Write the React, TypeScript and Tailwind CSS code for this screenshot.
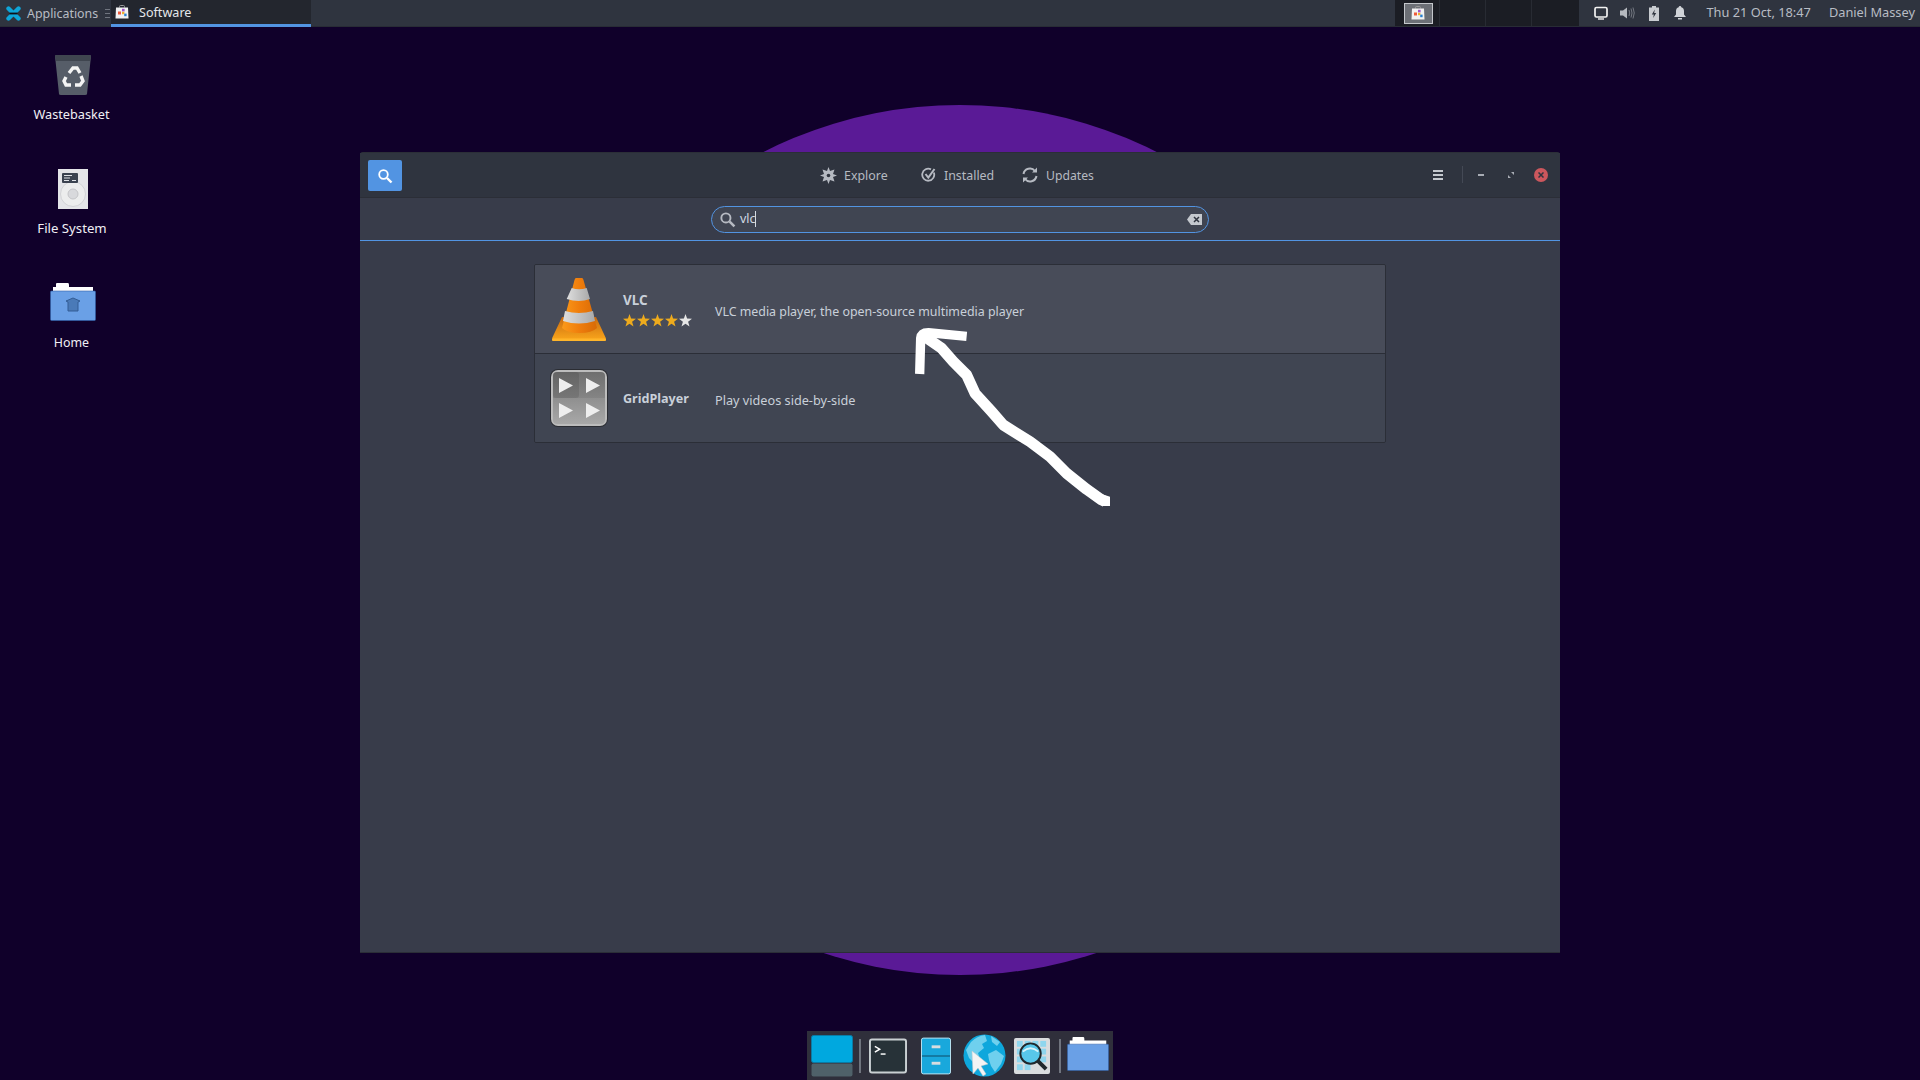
import React from "react";

const font = { fontFamily: '"Noto Sans", "Open Sans", sans-serif' };

function AppsLogo() {
  return (
    <svg width="15" height="15" viewBox="0 0 15 15">
      <path d="M2.500 2.500 L12.500 12.500 M12.500 2.500 L2.500 12.500" stroke="#0ea5d9" strokeWidth="4.400" strokeLinecap="round" />
      <rect x="3.500" y="6.600" width="8" height="1.800" fill="#101018" />
    </svg>
  );
}

function SoftwareIcon({ size = 14 }: { size?: number }) {
  return (
    <svg width={size} height={size} viewBox="0 0 14 14">
      <path d="M4.500 2.500 V1.500 Q4.500 .5 5.500 .5 H8.500 Q9.500 .5 9.500 1.500 V2.500" fill="none" stroke="#9a9a9a" strokeWidth="1" />
      <path d="M1 2.500 H13 L13.500 13.500 H.5 Z" fill="#f2f2f2" />
      <rect x="3" y="6.500" width="3" height="3" fill="#ef5a3c" />
      <rect x="7" y="3.800" width="2.600" height="2.600" fill="#a050c8" />
      <rect x="7" y="6.800" width="2.400" height="2.400" fill="#f0b030" />
      <rect x="9.200" y="8.600" width="2.400" height="2.600" fill="#2a80d0" />
    </svg>
  );
}

function Wastebasket() {
  return (
    <svg width="38" height="42" viewBox="0 0 38 42">
      <path d="M1 2 Q1 1 3 1 H35 Q37 1 37 2 L33 40 Q33 41 31 41 H7 Q5 41 5 40 Z" fill="#565d68" />
      <path d="M1 2 Q1 1 3 1 H35 Q37 1 37 2 L36 7 H2 Z" fill="#3f454f" />
      <g fill="none" stroke="#f4f4f4" strokeWidth="3.400">
        <path d="M15 19 L19 14 L23 14 L26 19" />
        <path d="M27 22 L29 27 L26 31 L21 31" />
        <path d="M17 31 L12 31 L10 27 L12 23" />
      </g>
    </svg>
  );
}

function FileSystemIcon() {
  return (
    <svg width="30" height="40" viewBox="0 0 30 40">
      <rect width="30" height="40" fill="#e4e5e8" />
      <circle cx="15" cy="25" r="12.500" fill="#eceded" stroke="#d2d3d6" />
      <circle cx="15" cy="25" r="5" fill="#d8d9dc" stroke="#c4c5c8" />
      <rect x="4" y="4" width="16" height="10" rx="1" fill="#3b4350" />
      <path d="M6 6.500 H14 M6 9 H12 M6 11.500 H11 M14 11.500 H18" stroke="#dfe2e6" strokeWidth="1" />
    </svg>
  );
}

function FolderIcon({ home, w = 46, h = 38 }: { home?: boolean; w?: number; h?: number }) {
  return (
    <svg width={w} height={h} viewBox="0 0 46 38" preserveAspectRatio="none">
      <path d="M3 4 H6 V1 Q6 0 7 0 H18 Q19 0 19 2 V4 H43 V10 H3 Z" fill="#ffffff" />
      <rect x=".5" y="8" width="45" height="29.500" rx="1" fill="#6aa0e6" stroke="#2f5fa8" strokeWidth=".6" />
      {home && <path d="M16 18 L23 15 L30 18 L28 19 V28 H18 V19 Z" fill="#4a7ab8" stroke="#335d95" strokeWidth="1" />}
    </svg>
  );
}

function Cone() {
  return (
    <svg width="54" height="63" viewBox="0 0 54 63">
      <defs>
        <linearGradient id="cb" x1="0" x2="0" y1="0" y2="1">
          <stop offset="0" stopColor="#c96a10" />
          <stop offset="1" stopColor="#fba81c" />
        </linearGradient>
        <linearGradient id="co" x1="0" x2="1" y1="0" y2="0">
          <stop offset="0" stopColor="#fb9a1a" />
          <stop offset=".5" stopColor="#ef7d0c" />
          <stop offset="1" stopColor="#d86a06" />
        </linearGradient>
        <linearGradient id="cw" x1="0" x2="1" y1="0" y2="0">
          <stop offset="0" stopColor="#dedede" />
          <stop offset="1" stopColor="#a9a9a9" />
        </linearGradient>
      </defs>
      <path d="M10 39 H44 L53.800 60 Q54 63 52 63 H2 Q0 63 .2 60 Z" fill="url(#cb)" />
      <rect x="0" y="60.500" width="54" height="2.500" rx="1" fill="#ffb52a" />
      <path d="M24 0 H30 Q31 0 31.500 2 L45 50 Q40 55 27.500 55 Q15 55 10 50 L22.500 2 Q23 0 24 0 Z" fill="url(#co)" />
      <path d="M19.700 10 Q27 12.500 34.700 10 L38 21 Q27 25 14.700 21 Z" fill="url(#cw)" />
      <path d="M13 33 Q27 37 41 33 L43 43 Q27 48 11 43 Z" fill="url(#cw)" />
    </svg>
  );
}

function GridIcon() {
  return (
    <svg width="60" height="60" viewBox="0 0 60 60">
      <defs>
        <linearGradient id="gg" x1="0" x2="0" y1="0" y2="1">
          <stop offset="0" stopColor="#6f6f6f" />
          <stop offset=".49" stopColor="#848484" />
          <stop offset=".5" stopColor="#8f8f8f" />
          <stop offset="1" stopColor="#a8a8a8" />
        </linearGradient>
      </defs>
      <rect x="1" y="1" width="58" height="58" rx="8" fill="#2b2d33" />
      <rect x="2" y="2" width="56" height="56" rx="7" fill="#bcbcbc" />
      <rect x="4" y="4" width="52" height="52" rx="4" fill="url(#gg)" />
      <rect x="4" y="4" width="26" height="26" rx="3" fill="#000" opacity=".1" />
      <path d="M10 10 L24 17.500 L10 25 Z M37 10 L51 17.500 L37 25 Z M10 35 L24 42.500 L10 50 Z M37 35 L51 42.500 L37 50 Z" fill="#eeeeee" />
    </svg>
  );
}

function Stars() {
  const star = "M6.500 0 L8.100 4.500 L13 4.700 L9.100 7.700 L10.500 12.500 L6.500 9.700 L2.500 12.500 L3.900 7.700 L0 4.700 L4.900 4.500 Z";
  return (
    <div className="flex gap-[1px]">
      {["#eeab1d", "#eeab1d", "#eeab1d", "#eeab1d", "#e6e6e6"].map((c, i) => (
        <svg key={i} width="13" height="13" viewBox="0 0 13 13">
          <path d={star} fill={c} />
        </svg>
      ))}
    </div>
  );
}

function Magnifier({ size, color }: { size: number; color: string }) {
  return (
    <svg width={size} height={size} viewBox="0 0 16 16" fill="none" stroke={color}>
      <circle cx="6.500" cy="6.500" r="4.300" strokeWidth="1.800" />
      <path d="M10 10 L14.500 14.500" strokeWidth="2.400" />
    </svg>
  );
}

function DesktopIcon({ icon, label, iconClass, labelClass }: { icon: React.ReactNode; label: string; iconClass: string; labelClass: string }) {
  return (
    <div className="flex h-[114px] w-[144px] flex-col items-center">
      <div className="flex h-[46px] items-end pl-[2px]">
        <div className={iconClass}>{icon}</div>
      </div>
      <div className={`whitespace-nowrap leading-[18px] text-[#f0eff4] ${labelClass}`}>{label}</div>
    </div>
  );
}

function ListRow({ hover, icon, name, stars, desc, descClass, nameClass }: { hover?: boolean; icon: React.ReactNode; name: string; stars?: boolean; desc: string; descClass: string; nameClass: string }) {
  return (
    <div className={`flex h-[88px] items-center ${hover ? "bg-[#484c59]" : "bg-[#404552]"}`}>
      <div className="flex w-[88px] shrink-0 items-center justify-center">{icon}</div>
      <div className="flex w-[92px] shrink-0 flex-col">
        <span className={`font-bold leading-[18px] text-[#c9d0d9] ${nameClass}`}>{name}</span>
        {stars && <Stars />}
      </div>
      <span className={`leading-[18px] text-[#c9d0d9] ${descClass}`}>{desc}</span>
    </div>
  );
}

export default function App() {
  return (
    <div className="relative flex h-[1080px] w-[1920px] flex-col overflow-hidden bg-[#10002a]" style={font}>
      {/* wallpaper disc */}
      <div className="absolute left-[525px] top-[105px] h-[870px] w-[870px] rounded-full bg-[#5a1a96]" />

      {/* top panel */}
      <header className="relative flex h-[27px] shrink-0 items-center border-b border-[#282c35] bg-[#2f343f] text-[#b8bcc4]">
        <div className="ml-[6px] flex w-[21px] items-center"><AppsLogo /></div>
        <span className="mt-[2px] w-[70px] whitespace-nowrap text-[12.4px]">Applications</span>
        <div className="ml-[8px] flex h-[9px] w-[5px] flex-col justify-between">
          <div className="h-px bg-[#70757f]" /><div className="h-px bg-[#70757f]" /><div className="h-px bg-[#70757f]" />
        </div>
        <div className="ml-[1px] flex h-[27px] w-[200px] items-center border-b-[3px] border-[#5294e2] bg-[#23262e] pl-[4px] text-[12.6px] text-[#e4e6ea]">
          <SoftwareIcon />
          <span className="ml-[10px] mt-[4px]">Software</span>
        </div>
        <div className="ml-auto flex h-[26px] w-[184px] self-start bg-[#1b1d24]">
          <div className="flex w-[45px] items-center justify-center border-r border-[#282b33] pl-[2px]">
            <div className="flex h-[21px] w-[29px] items-center justify-center border border-[#c4c7cc] bg-[#6c6f76]">
              <SoftwareIcon />
            </div>
          </div>
          <div className="w-[46px] border-r border-[#282b33]" />
          <div className="w-[46px] border-r border-[#282b33]" />
          <div className="flex-1" />
        </div>
        <div className="ml-[15px] flex items-center">
          <svg width="14" height="14" viewBox="0 0 14 14"><rect x="1" y="1.500" width="12" height="9.500" rx="1.500" fill="none" stroke="#f2f2f2" strokeWidth="1.700" /><path d="M4 13 H10" stroke="#f2f2f2" strokeWidth="1.400" /></svg>
          <svg className="ml-[12px]" width="15" height="14" viewBox="0 0 15 14"><path d="M0 4.500 H3 L7 1.500 V12.500 L3 9.500 H0 Z" fill="#b6b9bf" /><path d="M9 4 Q10.500 7 9 10 M11 2.500 Q13 7 11 11.500 M13 1.500 Q15.500 7 13 12.500" fill="none" stroke="#747881" strokeWidth="1" /></svg>
          <svg className="ml-[14px]" width="10" height="15" viewBox="0 0 10 15"><path d="M3 0 H7 V1.500 H10 V15 H0 V1.500 H3 Z" fill="#c9ccd1" /><path d="M5.800 3.500 L2.800 8.500 H4.800 L4.200 12 L7.200 7 H5.200 Z" fill="#2f343f" /></svg>
          <svg className="ml-[15px]" width="12" height="14" viewBox="0 0 12 14"><path d="M6 0 Q7.300 0 7.300 1.200 Q10 2 10 5 V8.500 L12 11 H0 L2 8.500 V5 Q2 2 4.700 1.200 Q4.700 0 6 0 Z" fill="#d0d3d8" /><rect x="4" y="12" width="4" height="1.500" fill="#d0d3d8" /></svg>
        </div>
        <span className="ml-[20px] whitespace-nowrap text-[12.8px]">Thu 21 Oct, 18:47</span>
        <span className="ml-[18px] mr-[5px] whitespace-nowrap text-[12.8px]">Daniel Massey</span>
      </header>

      {/* desktop icons */}
      <div className="absolute left-0 top-[50px] flex flex-col">
        <DesktopIcon label="Wastebasket" icon={<Wastebasket />} iconClass="" labelClass="mr-[1px] mt-[9px] text-[12.7px]" />
        <DesktopIcon label="File System" icon={<FileSystemIcon />} iconClass="mb-[1px]" labelClass="mt-[9px] text-[13.2px]" />
        <DesktopIcon label="Home" icon={<FolderIcon home />} iconClass="mb-[3px]" labelClass="mr-[1px] mt-[10px] text-[12.4px]" />
      </div>

      {/* window */}
      <section className="absolute left-[360px] top-[152px] flex h-[801px] w-[1200px] flex-col rounded-t-[3px] border-y border-[#2b2e37] bg-[#383c4a] text-[12.4px]">
        <div className="flex h-[45px] shrink-0 items-center border-b border-[#2b2e37] bg-[#2f343f] text-[#b6bac2]">
          <div className="ml-[8px] mt-[1px] flex h-[31px] w-[34px] items-center justify-center rounded-[2px] bg-[#5294e2]">
            <Magnifier size={16} color="#ffffff" />
          </div>
          <div className="ml-[418px] mt-[1px] flex items-center">
            <svg width="17" height="17" viewBox="0 0 17 17"><path d="M8.500 0 L10 4 L14.500 2.500 L13 7 L17 8.500 L13 10 L14.500 14.500 L10 13 L8.500 17 L7 13 L2.500 14.500 L4 10 L0 8.500 L4 7 L2.500 2.500 L7 4 Z" fill="#b6bac2" /><circle cx="8.500" cy="8.500" r="1.800" fill="#2f343f" /></svg>
            <span className="ml-[7px] mt-[2px] w-[45px]">Explore</span>
            <svg className="ml-[32px]" width="15" height="16" viewBox="0 0 15 16" fill="none" stroke="#b6bac2" strokeWidth="1.800"><path d="M12.800 5.500 A6 6 0 1 1 10 2.400" /><path d="M4.500 7 L7.300 10.500 L13.500 2" strokeWidth="2" /></svg>
            <span className="ml-[8px] mt-[2px] w-[49px]">Installed</span>
            <svg className="ml-[29px]" width="16" height="16" viewBox="0 0 16 16" fill="none" stroke="#b6bac2" strokeWidth="2"><path d="M1.500 7 A6.500 6.500 0 0 1 13 4" /><path d="M14.500 9 A6.500 6.500 0 0 1 3 12" /><path d="M15 0.500 V5.500 H10 Z M1 15.500 V10.500 H6 Z" fill="#b6bac2" stroke="none" /></svg>
            <span className="ml-[8px] mt-[2px] text-[12.2px]">Updates</span>
          </div>
          <div className="ml-auto mt-[-1px] flex items-center pr-[12px]">
            <div className="flex h-[10px] w-[10px] flex-col justify-between">
              <div className="h-[2px] bg-[#c4c8ce]" /><div className="h-[2px] bg-[#c4c8ce]" /><div className="h-[2px] bg-[#c4c8ce]" />
            </div>
            <div className="ml-[19px] h-[17px] w-px bg-[#444955]" />
            <div className="ml-[15px] h-[2px] w-[6px] bg-[#a8acb4]" />
            <svg className="ml-[24px]" width="6" height="6" viewBox="0 0 6 6"><path d="M3 0 H6 V3 Z M0 3 L3 6 H0 Z" fill="#a8acb4" /></svg>
            <div className="ml-[20px] flex h-[14px] w-[14px] items-center justify-center rounded-full bg-[#cc575d]">
              <svg width="6" height="6" viewBox="0 0 6 6"><path d="M.5 .5 L5.500 5.500 M5.500 .5 L.5 5.500" stroke="#2f343f" strokeWidth="1.500" /></svg>
            </div>
          </div>
        </div>

        <div className="flex h-[43px] shrink-0 items-center justify-center border-b border-[#5294e2]">
          <div className="flex h-[27px] w-[498px] items-center rounded-full border border-[#5294e2] bg-[#404552] pl-[7px] pr-[6px]">
            <Magnifier size={17} color="#b6bac2" />
            <span className="ml-[4px] text-[#d3dae3]">vlc</span>
            <div className="h-[16px] w-px bg-[#d3dae3]" />
            <svg className="ml-auto" width="15" height="11" viewBox="0 0 15 11"><path d="M4 0 H15 V11 H4 L0 5.500 Z" fill="#c4c8ce" /><path d="M7 3 L12 8 M12 3 L7 8" stroke="#2f343f" strokeWidth="1.500" /></svg>
          </div>
        </div>

        <div className="ml-[174px] mt-[23px] w-[852px] overflow-hidden rounded-[2px] border border-[#2b2e37]">
          <ListRow hover icon={<Cone />} name="VLC" nameClass="mb-[5px] text-[13.4px]" stars desc="VLC media player, the open-source multimedia player" descClass="mt-[6px] text-[12.4px]" />
          <div className="h-px bg-[#2b2e37]" />
          <ListRow icon={<GridIcon />} name="GridPlayer" nameClass="mt-[2px] text-[12.6px]" desc="Play videos side-by-side" descClass="mt-[4px] text-[12.7px]" />
        </div>
      </section>

      {/* hand-drawn arrow */}
      <svg className="absolute left-[800px] top-[280px]" width="340" height="250" viewBox="0 0 1020 750" fill="none" stroke="#ffffff" strokeWidth="33" strokeLinejoin="round">
        <path d="M915 664 L905 660 L860 628 L800 580 L750 530 L690 485 L610 435 L575 395 L525 340 L500 285 L460 245 L425 205 L375 170" />
        <path d="M359 282 L362 175 Q364 158 385 158 L500 169" strokeWidth="28" />
        <path d="M905 642 L930 650 V678 H905 Z" fill="#ffffff" stroke="none" />
      </svg>

      {/* dock */}
      <nav className="absolute bottom-0 left-[807px] flex h-[49px] w-[306px] items-center bg-[#2f2f3b] pl-[4px]">
        <svg width="42" height="42" viewBox="0 0 42 42"><rect x=".5" y=".5" width="41" height="27" rx="2" fill="#00a8df" stroke="#0a7ba5" /><rect x=".5" y="28.500" width="41" height="13" rx="2" fill="#4f6169" /></svg>
        <div className="ml-[6px] h-[34px] w-[2px] bg-[#70747e]" />
        <svg className="ml-[8px]" width="38" height="36" viewBox="0 0 39 36"><rect x="1" y="1" width="37" height="34" rx="2" fill="#273238" stroke="#c9cfd2" strokeWidth="2" /><path d="M6 8 L11 11 L6 14" fill="none" stroke="#fff" strokeWidth="1.500" /><path d="M12 16 H17" stroke="#fff" strokeWidth="1.500" /></svg>
        <svg className="ml-[14px]" width="30" height="38" viewBox="0 0 31 38"><rect x=".5" y=".5" width="30" height="37" rx="2" fill="#19a8dc" stroke="#bfe6f5" /><path d="M1 19 H30" stroke="#12698c" strokeWidth="1.500" /><rect x="11" y="8" width="9" height="3" fill="#d8dde0" /><rect x="11" y="25" width="9" height="3" fill="#d8dde0" /></svg>
        <svg className="ml-[12px]" width="43" height="43" viewBox="0 0 43 43"><circle cx="21.500" cy="21.500" r="21" fill="#0ea7dc" /><path d="M8 8 Q14 2 22 1 L24 7 L19 10 L21 14 L15 19 L17 25 L12 30 L6 24 L3 16 Z" fill="#6fd0ee" /><path d="M25 20 L33 16 L41 22 L38 30 L32 38 L28 32 L26 26 Z M28 2 L37 8 L34 12 L29 8 Z" fill="#6fd0ee" /><path d="M16 17 L17 40 L22 34 L27 42 L30 40 L25 32 L32 30 Z" transform="translate(-7 0)" fill="#f4f4f4" stroke="#c8c8c8" strokeWidth=".5" /></svg>
        <svg className="ml-[8px]" width="36" height="36" viewBox="0 0 37 37"><rect width="37" height="37" rx="2" fill="#d9dcde" /><g fill="#8fd6ee"><rect x="3" y="3" width="6" height="6" /><rect x="11" y="3" width="6" height="6" /><rect x="19" y="3" width="6" height="6" /><rect x="27" y="3" width="6" height="6" /><rect x="3" y="11" width="6" height="6" /><rect x="27" y="11" width="6" height="6" /><rect x="3" y="19" width="6" height="6" /><rect x="27" y="19" width="6" height="6" /><rect x="3" y="27" width="6" height="6" /><rect x="11" y="27" width="6" height="6" /></g><circle cx="17" cy="16" r="10.500" fill="#58c7ea" stroke="#20282c" strokeWidth="2" /><path d="M9 14 Q17 7 25 14" fill="none" stroke="#d8f4fb" strokeWidth="2" /><path d="M24.500 23.500 L33 32" stroke="#20282c" strokeWidth="4" /></svg>
        <div className="ml-[9px] h-[34px] w-[2px] bg-[#70747e]" />
        <div className="ml-[6px] mt-[-3px]"><FolderIcon w={42} h={34} /></div>
      </nav>
    </div>
  );
}
